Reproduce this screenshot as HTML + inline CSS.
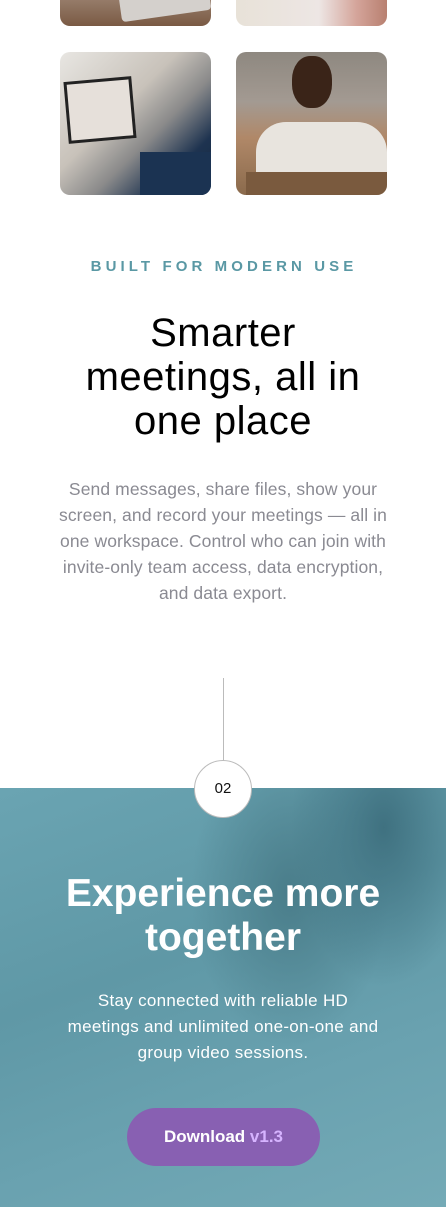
<!DOCTYPE html>
<html><head><meta charset="utf-8"><style>
*{margin:0;padding:0;box-sizing:border-box}
body{width:446px;height:1207px;overflow:hidden;background:#fff;font-family:"Liberation Sans",sans-serif;position:relative}
.img{position:absolute;border-radius:10px;overflow:hidden}
.t{position:absolute;left:0;width:446px;text-align:center}
</style></head><body>
<div class="img" style="left:60px;top:-120px;width:151px;height:146px;background:linear-gradient(180deg,#cfc7c0 0%,#a89282 70%,#7a5a44 100%)"><div style="position:absolute;left:60px;top:110px;width:90px;height:26px;background:#d4d0cc;border-radius:4px;transform:rotate(-8deg)"></div></div>
<div class="img" style="left:236px;top:-120px;width:151px;height:146px;background:linear-gradient(90deg,#e8e2d8 0%,#ede6e4 55%,#d4a49a 80%,#b88070 100%)"></div>
<div class="img" style="left:60px;top:52px;width:151px;height:143px;background:linear-gradient(135deg,#e8e6e2 0%,#c8c2ba 40%,#8a8a8a 60%,#1e3350 80%,#142840 100%)">
<div style="position:absolute;left:6px;top:27px;width:68px;height:62px;background:#e6e0da;border:3px solid #222;transform:rotate(-5deg)"></div>
<div style="position:absolute;left:80px;top:100px;width:71px;height:43px;background:#1b3352"></div>
</div>
<div class="img" style="left:236px;top:52px;width:151px;height:143px;background:linear-gradient(180deg,#8e8880 0%,#a39a92 35%,#b08868 60%,#8a6a4c 100%)">
<div style="position:absolute;left:20px;top:70px;width:131px;height:80px;background:#e8e4de;border-radius:30px 30px 0 0"></div>
<div style="position:absolute;left:56px;top:4px;width:40px;height:52px;background:#3a2418;border-radius:45%"></div>
<div style="position:absolute;left:10px;top:120px;width:141px;height:30px;background:#7a5a3e"></div>
</div>
<div class="t" style="top:258px;font-size:15px;letter-spacing:4.1px;color:#5a98a4;font-weight:bold;padding-left:2px">BUILT FOR MODERN USE</div>
<div class="t" style="top:311px;font-size:40px;letter-spacing:0.5px;line-height:44px;color:#000">Smarter<br>meetings, all in<br>one place</div>
<div class="t" style="top:476px;font-size:17.5px;letter-spacing:0.1px;line-height:26px;color:#8a8a92">Send messages, share files, show your<br>screen, and record your meetings — all in<br>one workspace. Control who can join with<br>invite-only team access, data encryption,<br>and data export.</div>
<div style="position:absolute;left:223px;top:678px;width:1px;height:85px;background:#bbb"></div>
<div style="position:absolute;left:0;top:788px;width:446px;height:419px;background:linear-gradient(160deg,#6aa4b2 0%,#5f98a6 40%,#6aa2b0 70%,#74aab6 100%)">
<div style="position:absolute;left:190px;top:0;width:200px;height:260px;background:radial-gradient(ellipse at 50% 40%,#4a7d8a 0%,rgba(74,125,138,0) 70%)"></div>
<div style="position:absolute;left:290px;top:0;width:156px;height:200px;background:radial-gradient(ellipse at 60% 20%,#3f7180 0%,rgba(63,113,128,0) 70%)"></div>
</div>
<div style="position:absolute;left:194px;top:760px;width:58px;height:58px;border-radius:50%;background:#fff;border:1px solid #bbb;text-align:center;line-height:56px;font-size:15px;color:#111">02</div>
<div class="t" style="top:872px;font-size:39px;letter-spacing:0px;line-height:44px;color:#fff;font-weight:bold">Experience more<br>together</div>
<div class="t" style="top:988px;font-size:17px;letter-spacing:0.3px;line-height:26px;color:#fff">Stay connected with reliable HD<br>meetings and unlimited one-on-one and<br>group video sessions.</div>
<div style="position:absolute;left:127px;top:1108px;width:193px;height:58px;border-radius:29px;background:#8860b2;text-align:center;line-height:58px;font-size:17px;font-weight:bold;color:#fff">Download <span style="color:#d6b4ff">v1.3</span></div>
</body></html>
